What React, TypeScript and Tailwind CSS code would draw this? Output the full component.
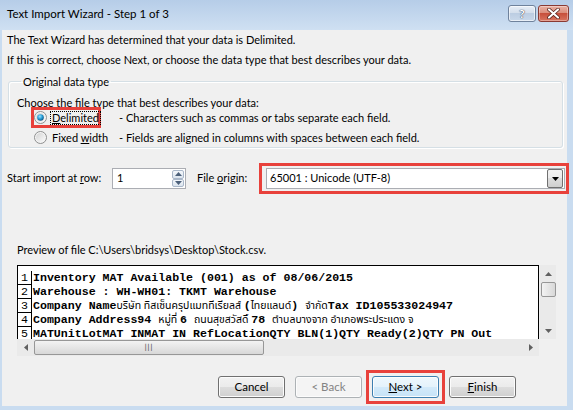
import React from "react";

type Seg = { t: string; thai?: boolean };
const lines: Seg[][] = [
  [{ t: "Inventory MAT Available (001) as of 08/06/2015" }],
  [{ t: "Warehouse : WH-WH01: TKMT Warehouse" }],
  [
    { t: "Company Name" },
    { t: "บริษัท ทิสเซ็นครุปแมททีเรียลส์ ", thai: true },
    { t: "(" },
    { t: "ไทยแลนด์", thai: true },
    { t: ") " },
    { t: "จำกัด", thai: true },
    { t: "Tax ID105533024947" },
  ],
  [
    { t: "Company Address94 " },
    { t: "หมู่ที่ ", thai: true },
    { t: "6 " },
    { t: "ถนนสุขสวัสดิ์ ", thai: true },
    { t: "78 " },
    { t: "ตำบลบางจาก อำเภอพระประแดง จ", thai: true },
  ],
  [{ t: "MATUnitLotMAT INMAT IN RefLocationQTY BLN(1)QTY Ready(2)QTY PN Out" }],
  [],
];

function Radio({ checked }: { checked: boolean }) {
  return (
    <svg width="13" height="13" viewBox="0 0 13 13" className="shrink-0">
      <defs>
        <linearGradient id={checked ? "rg1" : "rg0"} x1="0" y1="0" x2="1" y2="1">
          <stop offset="0" stopColor="#d4d4d4" />
          <stop offset="1" stopColor="#fafafa" />
        </linearGradient>
        <radialGradient id="dot" cx="0.4" cy="0.35" r="0.7">
          <stop offset="0" stopColor="#9be4ff" />
          <stop offset="0.5" stopColor="#2a9fd8" />
          <stop offset="1" stopColor="#0c4e7c" />
        </radialGradient>
      </defs>
      <circle cx="6.5" cy="6.5" r="6" fill="#f4f4f4" stroke="#8e8f8f" strokeWidth="1" />
      <circle cx="6.5" cy="6.5" r="4.5" fill={`url(#${checked ? "rg1" : "rg0"})`} />
      {checked && <circle cx="6.5" cy="6.5" r="3.3" fill="url(#dot)" />}
    </svg>
  );
}

function Btn({
  children,
  variant = "normal",
}: {
  children: React.ReactNode;
  variant?: "normal" | "disabled" | "default";
}) {
  const base =
    "w-[67px] h-[22px] rounded-[3px] border flex items-center justify-center text-[11.5px] shadow-[inset_0_0_0_1px_#fcfcfc]";
  if (variant === "disabled")
    return (
      <div className={`${base} border-[#adb2b5] bg-[#f4f4f4] text-[#838383]`}>{children}</div>
    );
  if (variant === "default")
    return (
      <div
        className={`${base} border-[#3c7fb1] bg-[linear-gradient(#eef7fd_0%,#e4f2fb_50%,#d3eafa_50%,#c6e3f7_100%)] text-black`}
      >
        {children}
      </div>
    );
  return (
    <div
      className={`${base} border-[#707070] bg-[linear-gradient(#f2f2f2_0%,#ebebeb_50%,#dddddd_50%,#cfcfcf_100%)] text-black`}
    >
      {children}
    </div>
  );
}

export default function App() {
  return (
    <div className="w-[573px] h-[410px] overflow-hidden flex flex-col bg-[#c9dcf0] font-['Lato',sans-serif] text-[11px] text-black">
      {/* Title bar */}
      <div className="h-[30px] shrink-0 flex items-start bg-linear-to-b from-[#b6cde8] to-[#cfe0f2]">
        <span className="ml-[7px] mt-[6px] text-[11.5px] leading-[16px] text-black">
          Text Import Wizard - Step 1 of 3
        </span>
        <div className="ml-auto mt-[5px] mr-[4px] flex gap-[2px]">
          <div className="w-[28px] h-[17px] rounded-[3px] border border-[#6f829c] bg-[linear-gradient(#e7eef7_0%,#d2ddeb_50%,#bccde2_50%,#c9d8ea_100%)] flex items-center justify-center shadow-[inset_0_0_0_1px_rgba(255,255,255,0.6)]">
            <span className="text-[12px] leading-[12px] font-bold text-white [text-shadow:0_0_1px_#2d3b52,0_0_1px_#2d3b52]">
              ?
            </span>
          </div>
          <div className="w-[31px] h-[17px] rounded-[3px] border border-[#8a3a33] bg-[linear-gradient(#eab1a3_0%,#d98a78_50%,#c7503c_50%,#d8745f_100%)] flex items-center justify-center shadow-[inset_0_0_0_1px_rgba(255,255,255,0.35)]">
            <svg width="13" height="11" viewBox="0 0 13 11">
              <path d="M2 1.5 L11 9.5 M11 1.5 L2 9.5" stroke="#4a1a14" strokeWidth="3.6" strokeLinecap="round" />
              <path d="M2 1.5 L11 9.5 M11 1.5 L2 9.5" stroke="#ffffff" strokeWidth="2.2" strokeLinecap="round" />
            </svg>
          </div>
        </div>
      </div>

      {/* Client area */}
      <div className="flex-1 ml-[2px] mr-[6px] mb-[4px] bg-[#f0f0f0] flex flex-col">
        <div className="pl-[5px] pt-[2px] leading-[15px]">
          The Text Wizard has determined that your data is Delimited.
        </div>
        <div className="pl-[5px] mt-[5px] leading-[15px]">
          If this is correct, choose Next, or choose the data type that best describes your data.
        </div>

        <fieldset className="mt-[7px] ml-[6px] mr-[4px] border border-[#d5dfe5] rounded-[3px] pl-[8px] pt-[6px] pb-[1px] shadow-[inset_1px_1px_0_#ffffff,1px_1px_0_#ffffff]">
          <legend className="ml-[4px] px-[2px] leading-[15px]">Original data type</legend>
          <div className="leading-[15px]">Choose the file type that best describes your data:</div>
          <div className="flex items-center h-[21px] mt-[-3px]">
            <div className="ml-[14px] h-[21px] w-[70px] shrink-0 border-[3px] border-[#e8413b] flex items-center">
              <Radio checked />
              <span className="ml-[3px] px-[1px] border border-dotted border-black leading-[12px]">
                <span className="underline">D</span>elimited
              </span>
            </div>
            <span className="ml-[18px] leading-[15px] whitespace-nowrap">
              - Characters such as commas or tabs separate each field.
            </span>
          </div>
          <div className="flex items-center h-[18px]">
            <div className="ml-[17px] flex items-center w-[85px] shrink-0">
              <Radio checked={false} />
              <span className="ml-[5px] leading-[15px] whitespace-nowrap">
                Fixed <span className="underline">w</span>idth
              </span>
            </div>
            <span className="leading-[15px] whitespace-nowrap">
              - Fields are aligned in columns with spaces between each field.
            </span>
          </div>
        </fieldset>

        {/* Start row / file origin */}
        <div className="mt-[15px] pl-[5px] flex items-center h-[31px] whitespace-nowrap">
          <span className="w-[105px] shrink-0">
            Start import at <span className="underline">r</span>ow:
          </span>
          <div className="flex h-[21px] shrink-0">
            <div className="w-[60px] h-[21px] bg-white border border-[#abadb3] border-r-0 flex items-center pl-[4px]">
              1
            </div>
            <div className="w-[14px] h-[21px] flex flex-col bg-white border border-[#abadb3] border-l-0 pr-[1px] py-[1px]">
              <div className="flex-1 rounded-[2px] border border-[#a9b7c9] bg-linear-to-b from-[#f4f7fb] to-[#dbe4ee] flex items-center justify-center">
                <svg width="7" height="4" viewBox="0 0 7 4">
                  <path d="M0 4 L3.5 0 L7 4 Z" fill="#4c607a" />
                </svg>
              </div>
              <div className="flex-1 rounded-[2px] border border-[#a9b7c9] bg-linear-to-b from-[#f4f7fb] to-[#dbe4ee] flex items-center justify-center">
                <svg width="7" height="4" viewBox="0 0 7 4">
                  <path d="M0 0 L3.5 4 L7 0 Z" fill="#4c607a" />
                </svg>
              </div>
            </div>
          </div>
          <span className="ml-[11px] w-[62px] shrink-0">
            File <span className="underline">o</span>rigin:
          </span>
          <div className="w-[310px] shrink-0 h-[31px] border-[3px] border-[#e8413b] pl-[4px] pr-[1px] py-[2px]">
            <div className="h-full bg-white border border-[#abadb3] flex items-center">
              <span className="pl-[3px] flex-1">65001 : Unicode (UTF-8)</span>
              <div className="w-[16px] h-[19px] mr-[1px] border border-[#707070] rounded-[2px] bg-[linear-gradient(#f2f2f2_0%,#ebebeb_50%,#dddddd_50%,#cfcfcf_100%)] flex items-center justify-center">
                <svg width="7" height="4" viewBox="0 0 7 4">
                  <path d="M0 0 L7 0 L3.5 4 Z" fill="#000" />
                </svg>
              </div>
            </div>
          </div>
        </div>

        {/* Preview */}
        <div className="mt-[48px] ml-[15px] leading-[15px]">
          Preview of file C:\Users\bridsys\Desktop\Stock.csv.
        </div>
        <div className="mt-[8px] ml-[15px] mr-[11px] h-[91px] flex flex-col bg-[#f0f0f0]">
          <div className="flex flex-1 min-h-0">
            <div className="flex-1 min-w-0 overflow-hidden bg-white border border-black border-b-0 pt-[5px] font-['Liberation_Mono','Noto_Sans_Thai',monospace] text-[11.6px] text-black">
              {lines.map((segs, i) => (
                <div key={i} className="flex h-[14px] leading-[14px]">
                  <div className="w-[14px] shrink-0 border-r border-b border-black text-center leading-[13px]">
                    {i < 5 ? i + 1 : ""}
                  </div>
                  <div className="whitespace-pre pl-[1px] leading-[14px] flex items-start">
                    {segs.map((s, j) =>
                      s.thai ? (
                        <span key={j} className="block font-normal font-['Tahoma','Noto_Sans_Thai',sans-serif] text-[10.5px] leading-[14px]">
                          {s.t}
                        </span>
                      ) : (
                        <span key={j} className="block font-semibold leading-[14px]">
                          {s.t}
                        </span>
                      )
                    )}
                  </div>
                </div>
              ))}
            </div>
            <div className="w-[17px] shrink-0 flex flex-col items-center bg-[#eaeaea] border-l border-[#f0f0f0]">
              <div className="h-[17px] flex items-center justify-center">
                <svg width="7" height="4" viewBox="0 0 7 4">
                  <path d="M0 4 L3.5 0 L7 4 Z" fill="#606060" />
                </svg>
              </div>
              <div className="w-[15px] h-[15px] rounded-[2px] border border-[#979797] bg-linear-to-r from-[#f3f3f3] to-[#d8d8d8]" />
              <div className="flex-1" />
              <div className="h-[17px] flex items-center justify-center">
                <svg width="7" height="4" viewBox="0 0 7 4">
                  <path d="M0 0 L3.5 4 L7 0 Z" fill="#606060" />
                </svg>
              </div>
            </div>
          </div>
          <div className="h-[17px] flex items-center bg-[#eaeaea]">
            <div className="w-[17px] h-full flex items-center justify-center">
              <svg width="4" height="7" viewBox="0 0 4 7">
                <path d="M4 0 L0 3.5 L4 7 Z" fill="#606060" />
              </svg>
            </div>
            <div className="w-[230px] h-[15px] rounded-[2px] border border-[#979797] bg-linear-to-b from-[#f3f3f3] to-[#d8d8d8] flex items-center justify-center">
              <span className="text-[7px] leading-[7px] tracking-[1px] text-[#606060] font-bold">|||</span>
            </div>
            <div className="flex-1" />
            <div className="w-[17px] h-full flex items-center justify-center">
              <svg width="4" height="7" viewBox="0 0 4 7">
                <path d="M0 0 L4 3.5 L0 7 Z" fill="#606060" />
              </svg>
            </div>
            <div className="w-[17px] h-full bg-[#f0f0f0]" />
          </div>
        </div>

        {/* Buttons */}
        <div className="mt-[20px] flex items-center justify-end mr-[51px] gap-[10px]">
          <Btn>Cancel</Btn>
          <Btn variant="disabled">&lt; Back</Btn>
          <div className="m-[-6px] border-[3px] border-[#e8413b] p-[3px]">
            <Btn variant="default">
              <span>
                <span className="underline">N</span>ext &gt;
              </span>
            </Btn>
          </div>
          <Btn>
            <span>
              <span className="underline">F</span>inish
            </span>
          </Btn>
        </div>
      </div>
    </div>
  );
}
